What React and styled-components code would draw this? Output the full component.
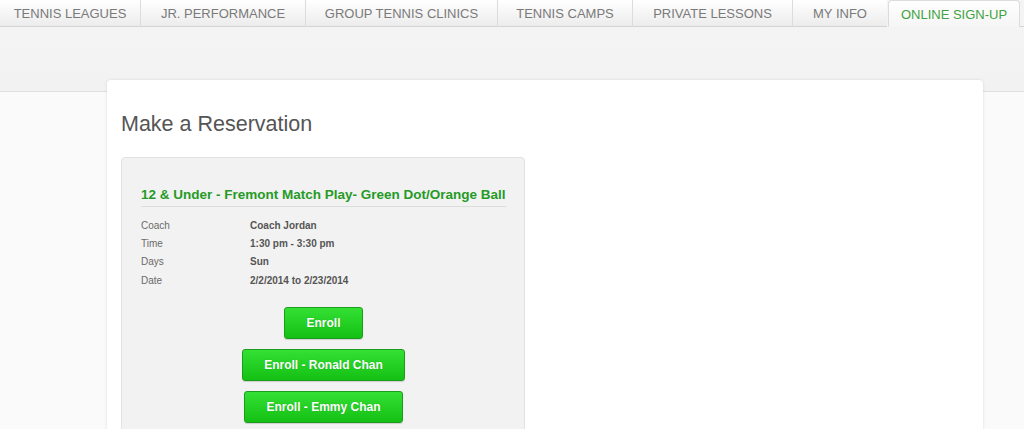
import React from 'react'
import styled, { createGlobalStyle } from 'styled-components'

const GlobalStyle = createGlobalStyle`
  html, body {
    margin: 0;
    padding: 0;
    background: #fafafa;
    font-family: "Liberation Sans", Arial, sans-serif;
  }
`

const Page = styled.div`
  width: 1024px;
  height: 429px;
  overflow: hidden;
  background: #fafafa;
`

const TabBar = styled.nav`
  display: flex;
  height: 27px;
  background: #f4f4f4;
`

const Tab = styled.div`
  display: flex;
  align-items: center;
  justify-content: center;
  flex-shrink: 0;
  box-sizing: border-box;
  width: ${props => props.width}px;
  height: 27px;
  font-size: 13px;
  text-transform: uppercase;
  white-space: nowrap;
  color: #7a7a7a;
  background: linear-gradient(#ffffff, #ececec);
  border-left: ${props => props.first ? 'none' : '1px solid #dcdcdc'};
  border-bottom: 1px solid #d4d4d4;
`

const ActiveTab = styled(Tab)`
  margin-left: 1px;
  color: #3fa33f;
  background: linear-gradient(#ffffff, #f5f5f5);
  border: 1px solid #dcdcdc;
  border-bottom: none;
  border-radius: 4px 4px 0 0;
`

const TabFiller = styled.div`
  flex: 1;
  border-bottom: 1px solid #d4d4d4;
  background: #f4f4f4;
`

const Band = styled.div`
  height: 64px;
  background: linear-gradient(#f4f4f4, #f2f2f2);
  border-bottom: 1px solid #dedede;
`

const Card = styled.section`
  margin: -12px 0 0 107px;
  width: 876px;
  height: 400px;
  box-sizing: border-box;
  background: #ffffff;
  border-radius: 4px;
  box-shadow: 0 0 3px rgba(0, 0, 0, 0.12);
  padding: 30px 0 0 14px;
`

const Heading = styled.h1`
  margin: 0 0 19px;
  font-size: 21.5px;
  font-weight: normal;
  color: #555555;
  line-height: 28px;
`

const ClassBox = styled.div`
  width: 404px;
  box-sizing: border-box;
  background: #f2f2f2;
  border: 1px solid #e2e2e2;
  border-radius: 4px;
  padding: 28px 18px 20px 19px;
`

const ClassTitle = styled.h2`
  margin: 0 0 9px;
  padding-bottom: 2px;
  font-size: 13.5px;
  font-weight: bold;
  color: #269a26;
  line-height: 18px;
  white-space: nowrap;
  border-bottom: 1px solid #dddddd;
`

const Details = styled.dl`
  display: grid;
  grid-template-columns: 109px 1fr;
  grid-auto-rows: 18.3px;
  margin: 0 0 18px;
  font-size: 10px;
  align-items: center;
`

const Label = styled.dt`
  color: #6a6a6a;
`

const Value = styled.dd`
  margin: 0;
  color: #555555;
  font-weight: bold;
`

const Actions = styled.div`
  display: flex;
  flex-direction: column;
  align-items: center;
  gap: 10px;
`

const EnrollButton = styled.button`
  height: 32px;
  padding: 0 21px;
  font-family: inherit;
  font-size: 12px;
  font-weight: bold;
  color: #ffffff;
  text-shadow: 0 0 1px rgba(0, 90, 0, 0.35);
  background: linear-gradient(#35e035, #14c014);
  border: 1px solid #1c9c1c;
  border-radius: 3px;
  box-shadow: 0 1px 1px rgba(0, 0, 0, 0.15);
  cursor: pointer;
`

const tabs = [
  { label: 'Tennis Leagues', width: 140 },
  { label: 'Jr. Performance', width: 165 },
  { label: 'Group Tennis Clinics', width: 192 },
  { label: 'Tennis Camps', width: 135 },
  { label: 'Private Lessons', width: 160 },
  { label: 'My Info', width: 95 }
]

const details = [
  ['Coach', 'Coach Jordan'],
  ['Time', '1:30 pm - 3:30 pm'],
  ['Days', 'Sun'],
  ['Date', '2/2/2014 to 2/23/2014']
]

const enrollOptions = ['Enroll', 'Enroll - Ronald Chan', 'Enroll - Emmy Chan']

export default function App () {
  return (
    <Page>
      <GlobalStyle />
      <TabBar>
        {tabs.map((tab, i) => (
          <Tab key={tab.label} first={i === 0} width={tab.width}>{tab.label}</Tab>
        ))}
        <ActiveTab width={132}>Online Sign-Up</ActiveTab>
        <TabFiller />
      </TabBar>
      <Band />
      <Card>
        <Heading>Make a Reservation</Heading>
        <ClassBox>
          <ClassTitle>12 &amp; Under - Fremont Match Play- Green Dot/Orange Ball</ClassTitle>
          <Details>
            {details.map(([label, value]) => (
              <React.Fragment key={label}>
                <Label>{label}</Label>
                <Value>{value}</Value>
              </React.Fragment>
            ))}
          </Details>
          <Actions>
            {enrollOptions.map(option => (
              <EnrollButton key={option}>{option}</EnrollButton>
            ))}
          </Actions>
        </ClassBox>
      </Card>
    </Page>
  )
}
